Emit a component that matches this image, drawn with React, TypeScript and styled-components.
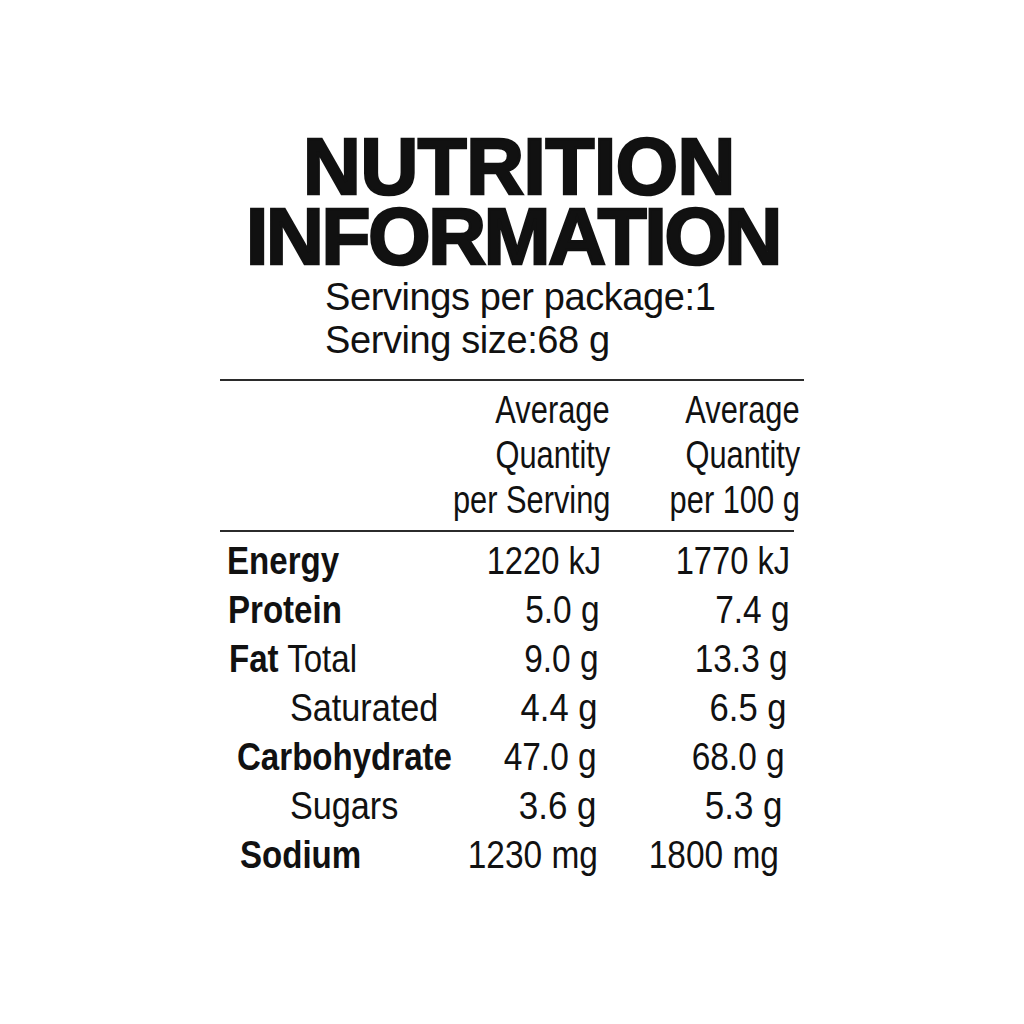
import React from 'react';
import styled, { createGlobalStyle } from 'styled-components';

const GlobalStyle = createGlobalStyle`
  html, body {
    margin: 0;
    padding: 0;
    background: #ffffff;
  }
  body {
    font-family: "Liberation Sans", Arial, Helvetica, sans-serif;
    color: #111111;
  }
`;

const Page = styled.main`
  width: 1024px;
  height: 1024px;
  box-sizing: border-box;
  padding-top: 132px;
  background: #ffffff;
  display: flex;
  flex-direction: column;
  align-items: center;
`;

const Panel = styled.section`
  width: 584px;
  display: flex;
  flex-direction: column;
`;

const Title = styled.h1`
  margin: 0;
  display: flex;
  flex-direction: column;
  align-items: center;
  font-family: "Liberation Sans", Arial, Helvetica, sans-serif;
  font-weight: 700;
  font-size: 80px;
  line-height: 70px;
  color: #111111;
  -webkit-text-stroke: 2.6px #111111;
`;

const TitleLine = styled.span<{ $spacing: number; $shift: number }>`
  display: block;
  white-space: nowrap;
  letter-spacing: ${(p) => p.$spacing}px;
  padding-left: ${(p) => p.$shift * 2}px;
`;

const Servings = styled.div`
  margin-top: 4px;
  padding-left: 105px;
  font-size: 38px;
  line-height: 43px;
  letter-spacing: -0.4px;
  color: #111111;
`;

const ServingLine = styled.div`
  white-space: nowrap;
`;

const Rule = styled.hr<{ $gap: number; $width: number }>`
  margin: ${(p) => p.$gap}px 0 0 0;
  width: ${(p) => p.$width}px;
  height: 2px;
  border: 0;
  background: #2b2b2b;
`;

const Columns = styled.div`
  display: grid;
  grid-template-columns: 230px 160px 194px;
  align-items: start;
`;

const HeaderRow = styled(Columns)`
  margin-top: 6px;
  font-size: 39px;
  line-height: 45px;
`;

const HeaderCell = styled.div<{ $pad: number }>`
  display: flex;
  flex-direction: column;
  align-items: flex-end;
  padding-right: ${(p) => p.$pad}px;
`;

const Body = styled.div`
  margin-top: 5px;
  display: flex;
  flex-direction: column;
`;

const Row = styled(Columns)`
  font-size: 38px;
  line-height: 49px;
`;

const NameCell = styled.div<{ $indent: number }>`
  padding-left: ${(p) => p.$indent}px;
  white-space: nowrap;
`;

const ValueCell = styled.div<{ $pad: number }>`
  text-align: right;
  padding-right: ${(p) => p.$pad}px;
  white-space: nowrap;
`;

const Squeeze = styled.span<{ $x: number; $origin: 'left' | 'right' }>`
  display: inline-block;
  white-space: nowrap;
  transform: scaleX(${(p) => p.$x});
  transform-origin: ${(p) => p.$origin} center;
`;

const Strong = styled.span`
  font-weight: 700;
`;

type Part = { text: string; bold: boolean };
type Nutrient = {
  name: Part[];
  indent: number;
  perServing: string;
  per100: string;
  right1: number;
  right2: number;
  squeeze: number;
};

const rows: Nutrient[] = [
  { name: [{ text: 'Energy', bold: true }], indent: 7, perServing: '1220 kJ', per100: '1770 kJ', right1: 601, right2: 790, squeeze: 0.86 },
  { name: [{ text: 'Protein', bold: true }], indent: 8, perServing: '5.0 g', per100: '7.4 g', right1: 600, right2: 790, squeeze: 0.88 },
  { name: [{ text: 'Fat', bold: true }, { text: ' Total', bold: false }], indent: 9, perServing: '9.0 g', per100: '13.3 g', right1: 599, right2: 788, squeeze: 0.88 },
  { name: [{ text: 'Saturated', bold: false }], indent: 70, perServing: '4.4 g', per100: '6.5 g', right1: 598, right2: 787, squeeze: 0.91 },
  { name: [{ text: 'Carbohydrate', bold: true }], indent: 17, perServing: '47.0 g', per100: '68.0 g', right1: 597, right2: 785, squeeze: 0.88 },
  { name: [{ text: 'Sugars', bold: false }], indent: 70, perServing: '3.6 g', per100: '5.3 g', right1: 597, right2: 783, squeeze: 0.92 },
  { name: [{ text: 'Sodium', bold: true }], indent: 20, perServing: '1230 mg', per100: '1800 mg', right1: 597, right2: 779, squeeze: 0.88 },
];

const COL1_END = 610;
const COL2_END = 804;

export default function App() {
  return (
    <>
      <GlobalStyle />
      <Page>
        <Panel>
          <Title>
            <TitleLine $spacing={-0.4} $shift={7}>NUTRITION</TitleLine>
            <TitleLine $spacing={-2.2} $shift={1}>INFORMATION</TitleLine>
          </Title>
          <Servings>
            <ServingLine>Servings per package:1</ServingLine>
            <ServingLine>Serving size:68 g</ServingLine>
          </Servings>
          <Rule $gap={17} $width={584} />
          <HeaderRow>
            <div />
            <HeaderCell $pad={0}>
              <Squeeze $x={0.79} $origin="right">Average</Squeeze>
              <Squeeze $x={0.79} $origin="right">Quantity</Squeeze>
              <Squeeze $x={0.79} $origin="right">per Serving</Squeeze>
            </HeaderCell>
            <HeaderCell $pad={4}>
              <Squeeze $x={0.79} $origin="right">Average</Squeeze>
              <Squeeze $x={0.79} $origin="right">Quantity</Squeeze>
              <Squeeze $x={0.79} $origin="right">per 100 g</Squeeze>
            </HeaderCell>
          </HeaderRow>
          <Rule $gap={8} $width={574} />
          <Body>
            {rows.map((r) => (
              <Row key={r.perServing}>
                <NameCell $indent={r.indent}>
                  <Squeeze $x={r.name[0].bold ? 0.87 : 0.9} $origin="left">
                    {r.name.map((part) =>
                      part.bold ? <Strong key={part.text}>{part.text}</Strong> : <span key={part.text}>{part.text}</span>
                    )}
                  </Squeeze>
                </NameCell>
                <ValueCell $pad={COL1_END - r.right1}>
                  <Squeeze $x={r.squeeze} $origin="right">{r.perServing}</Squeeze>
                </ValueCell>
                <ValueCell $pad={COL2_END - 610 - (r.right2 - 610)}>
                  <Squeeze $x={r.squeeze} $origin="right">{r.per100}</Squeeze>
                </ValueCell>
              </Row>
            ))}
          </Body>
        </Panel>
      </Page>
    </>
  );
}
